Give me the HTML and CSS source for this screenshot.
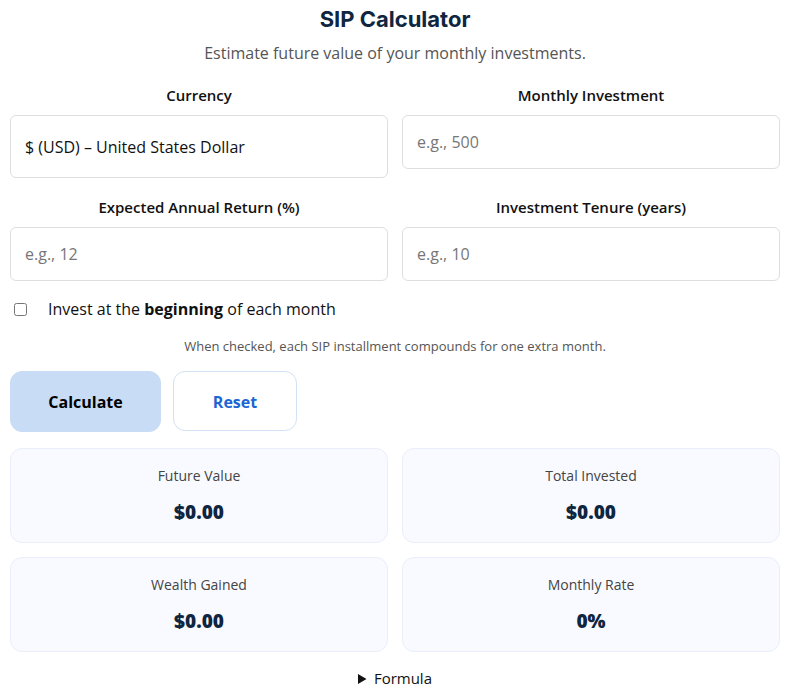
FILE: index.html
```html
<!DOCTYPE html>
<html lang="en">
<head>
<meta charset="utf-8">
<title>SIP Calculator</title>
<link rel="stylesheet" href="styles.css">
</head>
<body>
<main class="calc">
  <h1 class="title">SIP Calculator</h1>
  <p class="subtitle">Estimate future value of your monthly investments.</p>

  <div class="grid">
    <div class="field">
      <label class="label">Currency</label>
      <div class="select">$ (USD) – United States Dollar</div>
    </div>
    <div class="field">
      <label class="label">Monthly Investment</label>
      <input class="input" placeholder="e.g., 500">
    </div>
    <div class="field">
      <label class="label">Expected Annual Return (%)</label>
      <input class="input" placeholder="e.g., 12">
    </div>
    <div class="field">
      <label class="label">Investment Tenure (years)</label>
      <input class="input" placeholder="e.g., 10">
    </div>
  </div>

  <label class="check">
    <input type="checkbox" class="checkbox">
    <span>Invest at the <b>beginning</b> of each month</span>
  </label>
  <p class="hint">When checked, each SIP installment compounds for one extra month.</p>

  <div class="actions">
    <button class="btn btn-primary">Calculate</button>
    <button class="btn btn-secondary">Reset</button>
  </div>

  <div class="results">
    <div class="card"><div class="card-label">Future Value</div><div class="card-value">$0.00</div></div>
    <div class="card"><div class="card-label">Total Invested</div><div class="card-value">$0.00</div></div>
    <div class="card"><div class="card-label">Wealth Gained</div><div class="card-value">$0.00</div></div>
    <div class="card"><div class="card-label">Monthly Rate</div><div class="card-value">0%</div></div>
  </div>

  <details class="formula">
    <summary>Formula</summary>
  </details>
</main>
</body>
</html>
```
FILE: styles.css
```css
* { box-sizing: border-box; }
body {
  margin: 0;
  background: #fff;
  font-family: "Open Sans", "Noto Sans", sans-serif;
  color: #111;
}
.calc {
  padding: 0 10px;
}
.title {
  margin: 6px 0 0;
  font-family: Inter, "Noto Sans", sans-serif;
  font-size: 22px;
  font-weight: 700;
  color: #0f2540;
  text-align: center;
  line-height: 26px;
}
.subtitle {
  margin: 10px 0 0;
  text-align: center;
  font-size: 16px;
  color: #555;
  line-height: 22px;
}
.grid {
  margin-top: 21px;
  display: grid;
  grid-template-columns: 1fr 1fr;
  column-gap: 14px;
  row-gap: 19px;
  align-items: start;
}
.field {
  display: flex;
  flex-direction: column;
}
.label {
  text-align: center;
  font-size: 15px;
  font-weight: 600;
  line-height: 20px;
  color: #111;
  margin-bottom: 10px;
}
.select, .input {
  border: 1px solid #dedede;
  border-radius: 6px;
  background: #fff;
  font-family: inherit;
  font-size: 16px;
  padding: 0 14px;
  color: #111;
}
.select {
  height: 63px;
  display: flex;
  align-items: center;
}
.input {
  height: 54px;
  outline: none;
}
.input::placeholder { color: #777; }
.check {
  display: flex;
  align-items: center;
  margin-top: 17px;
  font-size: 16px;
  line-height: 22px;
  color: #111;
  gap: 21px;
}
.checkbox {
  margin: 0 0 0 4px;
  width: 13px;
  height: 13px;
}
.check b { font-weight: 700; }
.hint {
  margin: 17px 0 0;
  text-align: center;
  font-size: 13px;
  color: #555;
  line-height: 18px;
}
.actions {
  display: flex;
  gap: 12px;
  margin-top: 16px;
}
.btn {
  font-family: inherit;
  font-size: 16px;
  font-weight: 700;
  border-radius: 12px;
  height: 61px;
  cursor: pointer;
}
.btn-primary {
  width: 151px;
  background: #c8dcf5;
  border: 1px solid #c8dcf5;
  color: #000;
}
.btn-secondary {
  width: 124px;
  background: #fff;
  border: 1px solid #d3e1f5;
  color: #1a66d4;
  height: 60px;
  padding-top: 2px;
}
.results {
  margin-top: 16px;
  display: grid;
  grid-template-columns: 1fr 1fr;
  column-gap: 14px;
  row-gap: 14px;
}
.card {
  height: 95px;
  background: #f8faff;
  border: 1px solid #e9eefa;
  border-radius: 12px;
  text-align: center;
  padding-top: 17px;
}
.card-label {
  font-size: 14px;
  color: #444;
  line-height: 20px;
}
.card-value {
  margin-top: 14px;
  font-size: 19px;
  font-weight: 800;
  color: #0f2540;
  line-height: 24px;
}
.formula {
  margin-top: 16px;
  text-align: center;
  font-size: 15px;
}
.formula summary {
  cursor: pointer;
  color: #111;
}
```
